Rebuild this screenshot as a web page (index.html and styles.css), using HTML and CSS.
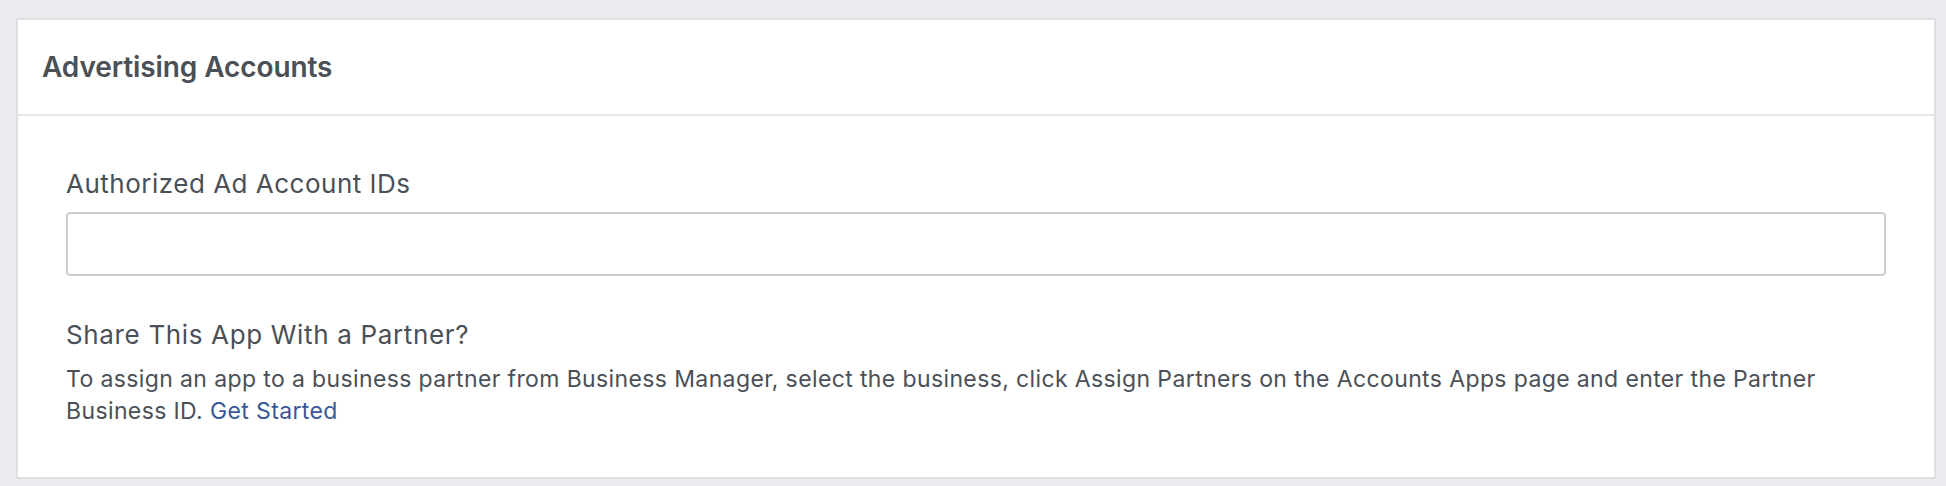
FILE: index.html
```html
<!DOCTYPE html>
<html lang="en">
<head>
<meta charset="utf-8">
<title>Advertising Accounts</title>
<link rel="stylesheet" href="styles.css">
</head>
<body>
<section class="card">
  <header class="card-header">
    <h2 class="card-title">Advertising Accounts</h2>
  </header>
  <div class="card-body">
    <label class="field-label" for="ad-ids">Authorized Ad Account IDs</label>
    <input class="field-input" id="ad-ids" type="text">
    <h3 class="share-title">Share This App With a Partner?</h3>
    <p class="share-text">To assign an app to a business partner from Business Manager, select the business, click Assign Partners on the Accounts Apps page and enter the Partner Business ID. <a class="link" href="#">Get Started</a></p>
  </div>
</section>
</body>
</html>
```
FILE: styles.css
```css
html, body {
  margin: 0;
  background: #e9ebee;
}
body {
  padding: 18px 10px 8px 16px;
  font-family: Inter, "Noto Sans", "Liberation Sans", sans-serif;
  color: #4b4f56;
}
.card {
  background: #fff;
  border: 2px solid #dddfe2;
}
.card-header {
  height: 94px;
  display: flex;
  align-items: center;
  padding: 0 24px;
  border-bottom: 2px solid #e5e6e9;
}
.card-title {
  margin: 0;
  font-size: 28px;
  font-weight: 600;
  letter-spacing: -0.1px;
  color: #4b4f56;
}
.card-body {
  padding: 52px 48px 50px;
  display: flex;
  flex-direction: column;
}
.field-label {
  font-size: 26px;
  line-height: 32px;
  letter-spacing: 0.5px;
  margin-bottom: 12px;
}
.field-input {
  box-sizing: border-box;
  height: 64px;
  border: 2px solid #ccd0d5;
  border-radius: 4px;
  background: #fff;
  margin: 0;
}
.share-title {
  margin: 43px 0 0;
  font-size: 26px;
  font-weight: 400;
  line-height: 32px;
  letter-spacing: 0.65px;
}
.share-text {
  margin: 12px 0 0;
  font-size: 23px;
  line-height: 32px;
  letter-spacing: 0.38px;
}
.link {
  color: #385898;
  text-decoration: none;
}
```
